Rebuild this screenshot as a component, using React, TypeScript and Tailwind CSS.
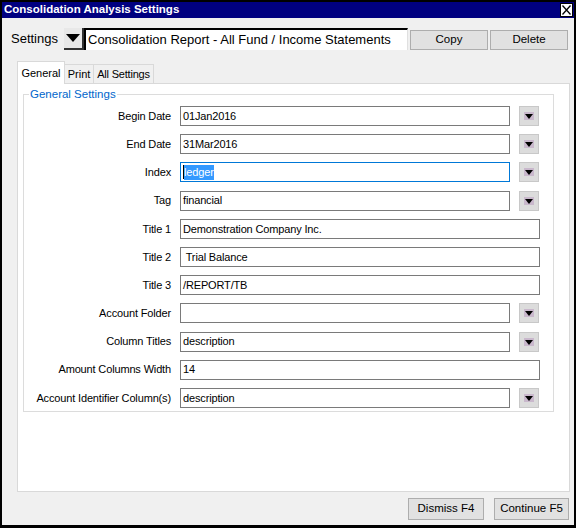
import React from 'react';

const font = { fontFamily: 'Tahoma, "Liberation Sans", Arial, sans-serif' };

type Row = {
  label: string;
  value: string;
  drop?: boolean;
  focus?: boolean;
};

const rows: Row[] = [
  { label: 'Begin Date', value: '01Jan2016', drop: true },
  { label: 'End Date', value: '31Mar2016', drop: true },
  { label: 'Index', value: 'ledger', drop: true, focus: true },
  { label: 'Tag', value: 'financial', drop: true },
  { label: 'Title 1', value: 'Demonstration Company Inc.' },
  { label: 'Title 2', value: ' Trial Balance' },
  { label: 'Title 3', value: '/REPORT/TB' },
  { label: 'Account Folder', value: '', drop: true },
  { label: 'Column Titles', value: 'description', drop: true },
  { label: 'Amount Columns Width', value: '14' },
  { label: 'Account Identifier Column(s)', value: 'description', drop: true },
];

const SmallDrop = () => (
  <div className="w-[20px] h-[20px] border border-[#c8c8c8] bg-[#dcdcdc] flex items-center justify-center">
    <svg width="12" height="10" viewBox="0 0 12 10">
      <rect x="1" y="1" width="10" height="8" fill="#c9b8cc" />
      <polygon points="2,3 10,3 6,8" fill="#000" />
    </svg>
  </div>
);

export default function App() {
  return (
    <div className="w-[576px] h-[528px] bg-black p-[2px] pb-[3px] flex flex-col text-black" style={font}>
      {/* title bar */}
      <div className="h-[16px] bg-[#000080] flex items-center justify-between pl-[2px] pr-[1px] shrink-0">
        <span className="text-white font-bold text-[11.5px] leading-none">Consolidation Analysis Settings</span>
        <div className="w-[13px] h-[14px] bg-white border border-black flex items-center justify-center">
          <svg width="9" height="10" viewBox="0 0 9 10">
            <path d="M0.5 0.5 L8.5 9.5 M8.5 0.5 L0.5 9.5" stroke="#000" strokeWidth="1.3" />
          </svg>
        </div>
      </div>

      <div className="flex-1 bg-[#f0f0f0] flex flex-col">
        {/* settings row */}
        <div className="flex items-center mt-[10px] h-[22px]">
          <div className="ml-[6px] w-[52px] h-[22px] flex items-center pl-[3px] text-[13px]">Settings</div>
          <div className="ml-[4px] w-[20px] h-[22px] bg-[#e8e8e8] border-r-2 border-b-2 border-[#333] flex items-center justify-center">
            <svg width="14" height="8" viewBox="0 0 14 8">
              <polygon points="0,0 14,0 7,8" fill="#000" />
            </svg>
          </div>
          <div className="w-[324px] h-[22px] bg-white border-t-2 border-l-2 border-black border-r border-r-[#e0e0e0] flex items-center pl-[2px] text-[13px] whitespace-nowrap overflow-hidden">
            Consolidation Report - All Fund / Income Statements
          </div>
          <button className="ml-[2px] w-[78px] h-[20px] bg-[#e1e1e1] border border-[#adadad] text-[11.5px] flex items-center justify-center self-end">
            Copy
          </button>
          <button className="ml-[2px] w-[78px] h-[20px] bg-[#e1e1e1] border border-[#adadad] text-[11.5px] flex items-center justify-center self-end">
            Delete
          </button>
        </div>

        {/* tabs */}
        <div className="mt-[10px] ml-[15px] flex items-end h-[23px] text-[11px] whitespace-nowrap">
          <div className="w-[48px] h-[23px] bg-white border border-b-0 border-[#d9d9d9] flex items-center justify-center -mb-px relative z-10">
            General
          </div>
          <div className="w-[29px] h-[19px] bg-[#f0f0f0] border border-l-0 border-b-0 border-[#d9d9d9] flex items-center justify-center">
            Print
          </div>
          <div className="w-[60px] h-[19px] bg-[#f0f0f0] border border-l-0 border-b-0 border-[#d9d9d9] flex items-center justify-center tracking-[-0.2px]">
            All Settings
          </div>
        </div>

        {/* panel */}
        <div className="ml-[15px] w-[553px] h-[409px] bg-white border border-[#d9d9d9] pt-[10px] pl-[5px]">
          <div className="relative w-[531px] h-[318px] border border-[#dcdcdc]">
            <span className="absolute -top-[8px] left-[5px] bg-white px-[1px] text-[11.5px] leading-[14px] text-[#0066cc]">
              General Settings
            </span>
            <div className="flex flex-col pt-[11px] gap-[8.2px]">
              {rows.map((r) => (
                <div key={r.label} className="flex items-center h-[20px]">
                  <div className="w-[147px] text-right text-[11px] whitespace-nowrap tracking-[-0.15px]">{r.label}</div>
                  <div
                    className={`ml-[9px] h-[20px] bg-white flex items-center pl-[2px] text-[11px] tracking-[-0.15px] whitespace-pre ${
                      r.drop ? 'w-[330px]' : 'w-[360px]'
                    } ${r.focus ? 'border border-[#0078d7]' : 'border border-[#7a7a7a]'}`}
                  >
                    {r.focus ? (
                      <span className="flex items-center">
                        <span className="w-px h-[14px] bg-black" />
                        <span className="bg-[#3399ff] text-white leading-[15px]">{r.value}</span>
                      </span>
                    ) : (
                      r.value
                    )}
                  </div>
                  {r.drop && (
                    <div className="ml-[9px]">
                      <SmallDrop />
                    </div>
                  )}
                </div>
              ))}
            </div>
          </div>
        </div>

        {/* footer buttons */}
        <div className="flex justify-end gap-[10px] mt-[6px] pr-[5px]">
          <button className="w-[76px] h-[22px] bg-[#e1e1e1] border border-[#adadad] text-[11.5px] flex items-center justify-center">
            Dismiss F4
          </button>
          <button className="w-[75px] h-[22px] bg-[#e1e1e1] border border-[#adadad] text-[11.5px] flex items-center justify-center">
            Continue F5
          </button>
        </div>
      </div>
    </div>
  );
}
